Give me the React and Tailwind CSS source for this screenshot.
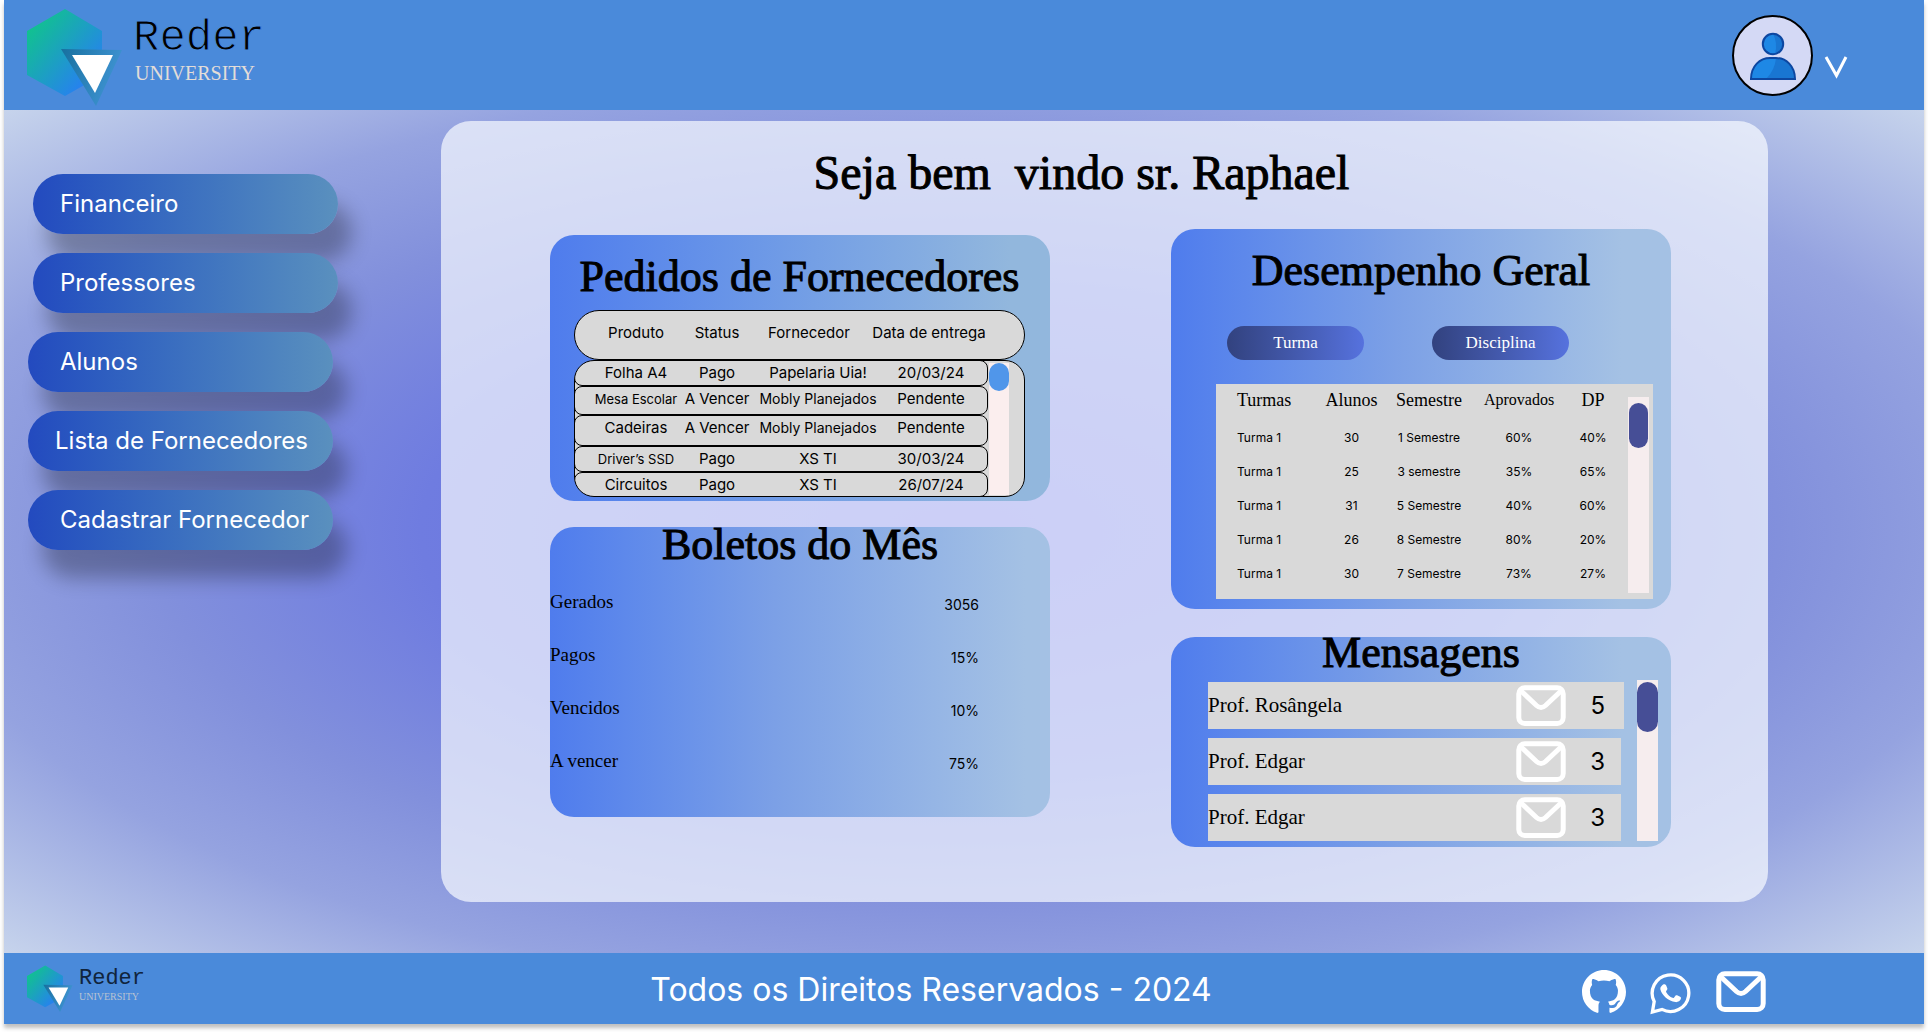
import React from "react";

function Logo({ small }) {
  return (
    <a
      href="#inicio"
      aria-label="Reder University"
      className={small ? "flex items-start gap-1.5" : "flex items-start gap-2.5"}
    >
      <svg viewBox="27 9 96 98" className={small ? "h-12 w-[46px]" : "h-[98px] w-24"} aria-hidden="true">
        <defs>
          <linearGradient id="hexFill" x1="0" y1="0.2" x2="0.8" y2="1">
            <stop offset="0" stopColor="#10c48c" />
            <stop offset="1" stopColor="#2979fb" />
          </linearGradient>
          <linearGradient id="triFill" x1="0" y1="0" x2="1" y2="0.3">
            <stop offset="0" stopColor="#17709f" />
            <stop offset="1" stopColor="#3f93d2" />
          </linearGradient>
        </defs>
        <path d="M65 9 102 31V75L65 96 27 75V31Z" fill="url(#hexFill)" />
        <path d="M61 49 122 50 96 106Z" fill="url(#triFill)" />
        <path d="M72 55H113L95 93Z" fill="#fff" />
      </svg>
      <span className={small ? "flex flex-col pt-0.5" : "flex flex-col pt-1"}>
        <span
          className={
            small
              ? "font-['Liberation_Mono',monospace] text-[22px] leading-6 text-[#10243c]"
              : "font-['Liberation_Mono',monospace] text-[44px] leading-[50px] text-black [-webkit-text-stroke:1px_#4a8ada]"
          }
        >
          Reder
        </span>
        <span
          className={
            small
              ? "font-['Liberation_Serif',serif] text-[10px] leading-3 text-[#b9c3d2]"
              : "pl-0.5 font-['Liberation_Serif',serif] text-xl leading-5 text-[#e2ddd8]"
          }
        >
          UNIVERSITY
        </span>
      </span>
    </a>
  );
}

function MailIcon() {
  return (
    <svg viewBox="0 0 50 42" className="h-[42px] w-[50px]" fill="none" stroke="#fff" aria-hidden="true">
      <rect x="2.8" y="2.8" width="44.4" height="35.600" rx="6" strokeWidth="5" />
      <path d="M4.500 5.500 20.500 20.500Q25 24.500 29.500 20.500L45.500 5.500" strokeWidth="5" />
    </svg>
  );
}

function GithubIcon() {
  return (
    <svg viewBox="0 0 16 16" className="size-11 -scale-x-100" fill="#fff" aria-hidden="true">
      <path d="M8 0C3.580 0 0 3.580 0 8c0 3.540 2.290 6.530 5.470 7.590.400.070.550-.170.550-.380 0-.190-.010-.820-.010-1.490-2.010.370-2.530-.490-2.690-.940-.090-.230-.480-.940-.820-1.130-.280-.150-.680-.520-.010-.530.630-.010 1.080.580 1.230.820.720 1.210 1.870.870 2.330.660.070-.520.280-.870.510-1.070-1.780-.200-3.640-.890-3.640-3.950 0-.870.310-1.590.820-2.150-.080-.200-.360-1.020.080-2.120 0 0 .670-.210 2.200.820.640-.180 1.320-.270 2-.270s1.360.090 2 .270c1.530-1.040 2.200-.820 2.200-.820.440 1.100.160 1.920.080 2.120.510.560.820 1.270.820 2.150 0 3.070-1.870 3.750-3.650 3.950.290.250.540.730.540 1.480 0 1.070-.010 1.930-.010 2.200 0 .210.150.460.550.380A8.010 8.010 0 0 0 16 8c0-4.420-3.580-8-8-8Z" />
    </svg>
  );
}

function WhatsappIcon() {
  return (
    <svg viewBox="0 0 42 42" className="size-[42px]" aria-hidden="true">
      <path
        d="M4.200 28.500A18.300 18.300 0 1 1 12 36.400L2.400 39Z"
        fill="none"
        stroke="#fff"
        strokeWidth="3.300"
      />
      <path
        d="M12 12.500c1.500-2 3.700-1.500 4.300.2l1 2.600c.3.900-.1 1.400-.9 2.400-.5.600-.5.900 0 1.700 1.500 2.600 3.500 4.300 6 5.400.8.300 1.200.2 1.700-.4l1.500-1.800c.4-.5.9-.6 1.500-.3l3 1.500c1 .5 1.100 1 .7 2.300-.6 2-3.200 3.300-5.400 3-7-1-13.500-6.500-15-12.500-.3-1.600.3-3 1.600-4.100Z"
        fill="#fff"
      />
    </svg>
  );
}

function UserIcon() {
  return (
    <svg viewBox="0 0 48 48" className="size-12" aria-hidden="true">
      <circle cx="24" cy="12" r="10.200" fill="#1976d2" />
      <path d="M24 1.800a10.200 10.200 0 1 0 2 20.200Q29 11 24 1.800Z" fill="#1e88e5" />
      <circle cx="24" cy="12" r="10.200" fill="none" stroke="#0d47a1" strokeWidth="2" />
      <path d="M2 47C2 34 11 26 21 26h6C37 26 46 34 46 47Z" fill="#1976d2" />
      <path d="M2 47C2 34 11 26 21 26h6Q26 38 17 47Z" fill="#1e88e5" />
      <path d="M2 47C2 34 11 26 21 26h6C37 26 46 34 46 47Z" fill="none" stroke="#0d47a1" strokeWidth="2" />
    </svg>
  );
}

const menu = [
  { label: "Financeiro", box: "ml-[5px] pl-[27px]" },
  { label: "Professores", box: "ml-[5px] pl-[27px]" },
  { label: "Alunos", box: "pl-8" },
  { label: "Lista de Fornecedores", box: "pl-[27px]" },
  { label: "Cadastrar Fornecedor", box: "pl-8" },
];

const orders = [
  { item: "Folha A4", status: "Pago", supplier: "Papelaria Uia!", date: "20/03/24", h: "h-[26px]" },
  { item: "Mesa Escolar", status: "A Vencer", supplier: "Mobly Planejados", date: "Pendente", h: "h-[29px] pb-[3px]", small: true, smallSupplier: true },
  { item: "Cadeiras", status: "A Vencer", supplier: "Mobly Planejados", date: "Pendente", h: "h-[31px] pb-[5px]", smallSupplier: true },
  { item: "Driver’s SSD", status: "Pago", supplier: "XS TI", date: "30/03/24", h: "h-[26px]", small: true },
  { item: "Circuitos", status: "Pago", supplier: "XS TI", date: "26/07/24", h: "h-[25px]" },
];

const bills = [
  ["Gerados", "3056"],
  ["Pagos", "15%"],
  ["Vencidos", "10%"],
  ["A vencer", "75%"],
];

const classes = [
  ["Turma 1", "30", "1 Semestre", "60%", "40%"],
  ["Turma 1", "25", "3 semestre", "35%", "65%"],
  ["Turma 1", "31", "5 Semestre", "40%", "60%"],
  ["Turma 1", "26", "8 Semestre", "80%", "20%"],
  ["Turma 1", "30", "7 Semestre", "73%", "27%"],
];

const messages = [
  { from: "Prof. Rosângela", count: 5 },
  { from: "Prof. Edgar", count: 3 },
  { from: "Prof. Edgar", count: 3 },
];

function CardTitle({ children }) {
  return (
    <h2 className="text-center font-['Liberation_Serif',serif] text-[44px] leading-9 whitespace-nowrap [-webkit-text-stroke:1px_black]">
      {children}
    </h2>
  );
}

function Orders() {
  return (
    <section className="h-[266px] rounded-3xl bg-linear-to-r from-[#4f7ced] to-[#92b7dd] to-92% pt-6 pr-[25px] pl-6">
      <CardTitle>Pedidos de Fornecedores</CardTitle>
      <div className="relative mt-[15px]">
        <table className="block text-[15px] leading-5">
          <thead className="block h-[50px] rounded-full border border-black bg-[#d9d9d9]">
            <tr className="grid h-full grid-cols-[88fr_74fr_110fr_130fr] items-center pr-[30px] pb-1 pl-[17px] *:font-normal *:whitespace-nowrap">
              <th>Produto</th>
              <th>Status</th>
              <th>Fornecedor</th>
              <th>Data de entrega</th>
            </tr>
          </thead>
          <tbody className="block overflow-hidden rounded-[20px] border border-black bg-[#d9d9d9] pr-9">
            {orders.map((o) => (
              <tr
                key={o.item}
                className={
                  "-ml-px grid grid-cols-[88fr_74fr_128fr_98fr] items-center rounded-lg border border-black pr-[7px] pl-[17px] text-center whitespace-nowrap first:-mt-px last:-mb-px *:-mx-2 " +
                  o.h
                }
              >
                <td className={o.small ? "text-[13px]" : ""}>{o.item}</td>
                <td>{o.status}</td>
                <td className={o.smallSupplier ? "text-sm" : ""}>{o.supplier}</td>
                <td>{o.date}</td>
              </tr>
            ))}
          </tbody>
        </table>
        <div className="absolute right-4 bottom-0.5 h-[132px] w-5 bg-[#fbeeee]">
          <div className="h-7 rounded-full bg-[#5096ea]" />
        </div>
      </div>
    </section>
  );
}

function Bills() {
  return (
    <section className="mt-[26px] h-[290px] rounded-3xl bg-linear-to-r from-[#4f7ced] via-[#7ca0e6] via-45% to-[#a4c1e4] to-95%">
      <CardTitle>Boletos do Mês</CardTitle>
      <dl className="mt-3">
        {bills.map(([label, value]) => (
          <div key={label} className="flex h-[53px] items-center justify-between pr-[71px]">
            <dt className="font-['Liberation_Serif',serif] text-[19px] leading-6">{label}</dt>
            <dd className="pt-[7px] text-sm">{value}</dd>
          </div>
        ))}
      </dl>
    </section>
  );
}

function Performance() {
  return (
    <section className="h-[380px] rounded-3xl bg-linear-to-r from-[#4f7ced] via-[#7ca0e6] via-45% to-[#a4c1e4] to-90% pt-6">
      <CardTitle>Desempenho Geral</CardTitle>
      <div className="mt-[37px] mr-[102px] ml-14 flex justify-between">
        {["Turma", "Disciplina"].map((t) => (
          <button
            key={t}
            type="button"
            className="h-[34px] w-[137px] rounded-full bg-linear-to-r from-[#32427f] to-[#5672de] font-['Liberation_Serif',serif] text-[17px] text-white"
          >
            {t}
          </button>
        ))}
      </div>
      <div className="mt-6 mr-[18px] ml-[45px] flex h-[215px] items-start bg-[#d9d9d9]">
        <table className="flex-1 table-fixed text-center text-xs">
          <thead>
            <tr className="h-[37px] align-top font-['Liberation_Serif',serif] text-lg leading-8 *:p-0 *:font-normal">
              <th className="w-[98px] text-left">
                <span className="pl-[21px]">Turmas</span>
              </th>
              <th className="w-[75px]">Alunos</th>
              <th className="w-20">Semestre</th>
              <th className="w-[100px] text-base leading-8">Aprovados</th>
              <th className="w-12">DP</th>
            </tr>
          </thead>
          <tbody>
            {classes.map((row, i) => (
              <tr key={i} className="h-[34px]">
                {row.map((cell, j) => (
                  <td key={j} className={j === 0 ? "pl-[21px] text-left" : "p-0"}>
                    {cell}
                  </td>
                ))}
              </tr>
            ))}
          </tbody>
        </table>
        <div className="mt-[13px] mr-1 ml-[11px] h-[196px] w-[21px] bg-[#f6edee] px-px pt-1.5">
          <div className="h-[45px] rounded-full bg-[#464e96]" />
        </div>
      </div>
    </section>
  );
}

function Messages() {
  return (
    <section className="mt-7 flex h-[210px] flex-col rounded-3xl bg-linear-to-r from-[#4f7ced] via-[#7ca0e6] via-45% to-[#a4c1e4] to-90%">
      <div className="-mt-0.5">
        <CardTitle>Mensagens</CardTitle>
      </div>
      <div className="mt-[9px] mr-[13px] ml-[37px] flex">
        <ul className="mt-0.5 flex flex-1 flex-col gap-[9px]">
          {messages.map((m, i) => (
            <li
              key={i}
              className={
                i === 0
                  ? "flex h-[47px] items-center bg-[#d9d9d9]"
                  : "mr-[3px] flex h-[47px] items-center bg-[#d9d9d9]"
              }
            >
              <span className="flex-1 font-['Liberation_Serif',serif] text-[21px]">{m.from}</span>
              <MailIcon />
              <span className={i === 0 ? "mr-[19px] ml-6 text-2xl" : "mr-4 ml-6 text-2xl"}>{m.count}</span>
            </li>
          ))}
        </ul>
        <div className="ml-[13px] w-[21px] bg-[#f6edee] pt-0.5">
          <div className="h-[50px] rounded-full bg-[#464e96]" />
        </div>
      </div>
    </section>
  );
}

export default function App() {
  return (
    <div className="min-h-screen bg-white px-1 pb-2 font-[Inter,sans-serif] text-black">
      <div className="flex min-h-[1024px] flex-col shadow-[0_4px_4px_rgba(0,0,0,0.25)]">
        <header className="flex h-[110px] items-start justify-between bg-[#4a8ada] pt-[9px] pr-[76px] pl-[23px]">
          <Logo />
          <div className="flex items-center gap-[11px] pt-1.5">
            <div className="flex size-[81px] items-center justify-center rounded-full border-2 border-black bg-[#d4d9f5]">
              <UserIcon />
            </div>
            <button type="button" aria-label="Abrir menu do usuário" className="pt-6">
              <svg viewBox="0 0 24 24" className="size-6" fill="none" stroke="#fff" strokeWidth="3" aria-hidden="true">
                <path d="M2 1 12.500 19.500 22 1" />
              </svg>
            </button>
          </div>
        </header>

        <main className="flex flex-1 items-start bg-[radial-gradient(ellipse_farthest-corner_at_center,#6468e4_0%,#6f7ce0_40%,#8290dc_60%,#95a3e0_77%,#cfdcee_104%)] pt-[11px] pr-[156px] pb-[51px]">
          <nav className="w-[437px] shrink-0 pt-[53px] pl-6">
            <ul className="flex flex-col gap-[19px]">
              {menu.map((m) => (
                <li key={m.label}>
                  <button
                    type="button"
                    className={
                      "h-[60px] w-[305px] rounded-full bg-linear-to-r from-[#234abf] to-[#5a90be] text-left text-2xl whitespace-nowrap text-white shadow-[14px_28px_20px_rgba(0,0,0,0.28)] " +
                      m.box
                    }
                  >
                    {m.label}
                  </button>
                </li>
              ))}
            </ul>
          </nav>

          <div className="min-h-[781px] flex-1 rounded-[30px] bg-[#f8fbff]/70 pr-[97px] pl-[109px]">
            <h1 className="pt-[26px] pr-[58px] text-center font-['Liberation_Serif',serif] text-5xl leading-[52px] whitespace-pre [-webkit-text-stroke:1px_black]">
              Seja bem{"  "}vindo sr. Raphael
            </h1>
            <div className="mt-[30px] grid grid-cols-2 gap-[121px]">
              <div className="pt-1.5">
                <Orders />
                <Bills />
              </div>
              <div>
                <Performance />
                <Messages />
              </div>
            </div>
          </div>
        </main>

        <footer className="grid h-[71px] grid-cols-[1fr_auto_1fr] items-center bg-[#4a8ada] pr-[89px] pl-[23px]">
          <Logo small />
          <p className="pt-0.5 text-[32px] leading-10 text-white">Todos os Direitos Reservados - 2024</p>
          <div className="flex items-center justify-end gap-6 pt-1.5 pr-[69px]">
            <a href="#github" aria-label="GitHub">
              <GithubIcon />
            </a>
            <a href="#whatsapp" aria-label="WhatsApp" className="pt-1">
              <WhatsappIcon />
            </a>
            <a href="#email" aria-label="E-mail">
              <MailIcon />
            </a>
          </div>
        </footer>
      </div>
    </div>
  );
}
